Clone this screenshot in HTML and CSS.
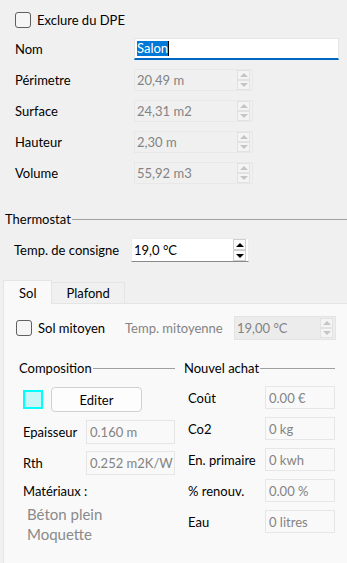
FILE: index.html
```html
<!DOCTYPE html>
<html lang="fr">
<head>
    <meta charset="UTF-8">
    <title>Pièce</title>
    <link rel="stylesheet" href="styles.css">
</head>
<body>
    <div class="top">
        <label class="check"><span class="box"></span>Exclure du DPE</label>
        <div class="form">
            <span class="lbl">Nom</span>
            <div class="edit focus"><span class="sel">Salon</span><span class="caret"></span></div>

            <span class="lbl">Périmetre</span>
            <div class="spin off"><span class="val">20,49 m</span><span class="arrows"><i class="up"></i><i class="dn"></i></span></div>

            <span class="lbl">Surface</span>
            <div class="spin off"><span class="val">24,31 m2</span><span class="arrows"><i class="up"></i><i class="dn"></i></span></div>

            <span class="lbl">Hauteur</span>
            <div class="spin off"><span class="val">2,30 m</span><span class="arrows"><i class="up"></i><i class="dn"></i></span></div>

            <span class="lbl">Volume</span>
            <div class="spin off"><span class="val">55,92 m3</span><span class="arrows"><i class="up"></i><i class="dn"></i></span></div>
        </div>
    </div>

    <div class="group-title thermo-title">Thermostat</div>
    <div class="thermo">
        <span class="lbl">Temp. de consigne</span>
        <div class="spin on"><span class="val">19,0 °C</span><span class="arrows"><i class="up"></i><i class="dn"></i></span></div>
    </div>

    <div class="tabs">
        <div class="tab active">Sol</div>
        <div class="tab">Plafond</div>
    </div>

    <div class="panel">
        <div class="mitoyen">
            <label class="check"><span class="box"></span>Sol mitoyen</label>
            <span class="muted">Temp. mitoyenne</span>
            <div class="spin off dark"><span class="val">19,00 °C</span><span class="arrows"><i class="up"></i><i class="dn"></i></span></div>
        </div>

        <div class="cols">
            <div class="col left">
                <div class="group-title">Composition</div>
                <div class="edit-row">
                    <span class="swatch"></span>
                    <button class="btn">Editer</button>
                </div>
                <div class="fields">
                    <span class="lbl">Epaisseur</span>
                    <div class="ro">0.160 m</div>
                    <span class="lbl">Rth</span>
                    <div class="ro">0.252 m2K/W</div>
                </div>
                <div class="mat-title">Matériaux :</div>
                <div class="mats">
                    <div>Béton plein</div>
                    <div>Moquette</div>
                </div>
            </div>

            <div class="col right">
                <div class="group-title">Nouvel achat</div>
                <div class="fields buy">
                    <span class="lbl">Coût</span>
                    <div class="ro">0.00 €</div>
                    <span class="lbl">Co2</span>
                    <div class="ro">0 kg</div>
                    <span class="lbl">En. primaire</span>
                    <div class="ro">0 kwh</div>
                    <span class="lbl">% renouv.</span>
                    <div class="ro">0.00 %</div>
                    <span class="lbl">Eau</span>
                    <div class="ro">0 litres</div>
                </div>
            </div>
        </div>
    </div>
</body>
</html>
```

FILE: styles.css
```css
* {
    margin: 0;
    padding: 0;
    box-sizing: border-box;
}

body {
    width: 347px;
    height: 563px;
    overflow: hidden;
    background: #f0f0f0;
    color: #000;
    font-family: Lato, "Liberation Sans", sans-serif;
    font-size: 13px;
    line-height: 16px;
}

/* checkbox */
.check {
    display: flex;
    align-items: center;
    gap: 6px;
}

.check .box {
    width: 16px;
    height: 16px;
    border: 1px solid #5f5f5f;
    border-radius: 3px;
    background: #f5f5f5;
}

/* top form */
.top {
    padding: 12px 9px 0 15px;
}

.form {
    display: grid;
    grid-template-columns: 119px 205px;
    grid-auto-rows: 22px;
    row-gap: 9px;
    align-items: center;
    margin-top: 10px;
}

.edit {
    height: 22px;
    background: #fff;
    border: 1px solid #e5e5e5;
    display: flex;
    align-items: center;
    padding-left: 2px;
}

.edit.focus {
    border-bottom: 2px solid #0067c0;
}

.sel {
    background: #0078d7;
    color: #fff;
    line-height: 15px;
}

.caret {
    width: 1px;
    height: 15px;
    background: #000;
}

/* spin boxes */
.spin {
    width: 119px;
    height: 22px;
    display: flex;
    align-items: center;
    border: 1px solid #e8e8e8;
    padding-left: 2px;
}

.spin .val {
    flex: 1;
}

.spin.off {
    color: #838383;
}

.spin.dark {
    background: #ececec;
    border-color: #e4e4e4;
}

.arrows {
    display: flex;
    flex-direction: column;
    margin-right: 2px;
}

.arrows i {
    width: 13px;
    height: 10px;
    border: 1px solid #e2e2e2;
    background: #f4f4f4;
    display: flex;
    align-items: center;
    justify-content: center;
}

.arrows i::after {
    content: '';
    border-left: 4px solid transparent;
    border-right: 4px solid transparent;
}

.arrows .up::after {
    border-bottom: 4px solid #c5c5c5;
}

.arrows .dn::after {
    border-top: 4px solid #c5c5c5;
}

/* group titles */
.group-title {
    display: flex;
    align-items: center;
}

.group-title::after {
    content: '';
    flex: 1;
    height: 1px;
    background: #a0a0a0;
    margin-left: 1px;
}

.thermo-title {
    margin: 27px 0 0 5px;
}

.thermo {
    display: flex;
    align-items: center;
    margin: 11px 0 0 14px;
}

.thermo .lbl {
    width: 117px;
}

.spin.on {
    width: 118px;
    height: 24px;
    background: #fff;
    border-color: #ececec;
    border-bottom-color: #8a8a8a;
}

.spin.on .arrows i {
    border-color: #cfcfcf;
    background: #fbfbfb;
    height: 11px;
}

.spin.on .up::after {
    border-bottom-color: #000;
}

.spin.on .dn::after {
    border-top-color: #000;
}

/* tabs */
.tabs {
    display: flex;
    align-items: flex-end;
    height: 23px;
    margin: 18px 0 0 3px;
}

.tab {
    height: 21px;
    padding: 0 14px;
    border: 1px solid #e5e5e5;
    border-bottom: none;
    display: flex;
    align-items: center;
    background: #f0f0f0;
}

.tab.active {
    height: 24px;
    padding: 0 15px;
    background: #f9f9f9;
    margin-bottom: -1px;
    position: relative;
}

.tab + .tab {
    border-left: none;
}

.panel {
    margin-left: 3px;
    height: 260px;
    background: #f9f9f9;
    border-top: 1px solid #e5e5e5;
    border-left: 1px solid #e5e5e5;
}

.mitoyen {
    display: flex;
    align-items: center;
    margin: 12px 0 0 12px;
}

.mitoyen .check {
    width: 109px;
}

.muted {
    color: #838383;
    width: 109px;
}

.mitoyen .spin {
    width: 102px;
    height: 24px;
}

/* columns */
.cols {
    display: flex;
    gap: 9px;
    margin: 20px 0 0 15px;
}

.col.left {
    width: 156px;
}

.col.right {
    width: 151px;
}

.edit-row {
    display: flex;
    align-items: center;
    gap: 8px;
    margin: 11px 0 0 4px;
}

.swatch {
    width: 20px;
    height: 19px;
    border: 2px solid #00ffff;
    background: #c9f7f7;
}

.btn {
    width: 91px;
    height: 25px;
    font: inherit;
    background: #fdfdfd;
    border: 1px solid #d0d0d0;
    border-radius: 4px;
}

.fields {
    display: grid;
    grid-template-columns: 63px 89px;
    grid-auto-rows: 24px;
    row-gap: 7px;
    align-items: center;
    margin: 8px 0 0 4px;
}

.ro {
    height: 100%;
    border: 1px solid #e6e6e6;
    color: #838383;
    display: flex;
    align-items: center;
    padding-left: 3px;
}

.fields.buy {
    grid-template-columns: 77px 70px;
    grid-auto-rows: 23px;
    row-gap: 8px;
    margin-top: 10px;
}

.mat-title {
    margin: 8px 0 0 4px;
}

.mats {
    margin: 5px 0 0 8px;
    color: #8a8a8a;
    font-size: 15px;
    line-height: 20px;
}
```
